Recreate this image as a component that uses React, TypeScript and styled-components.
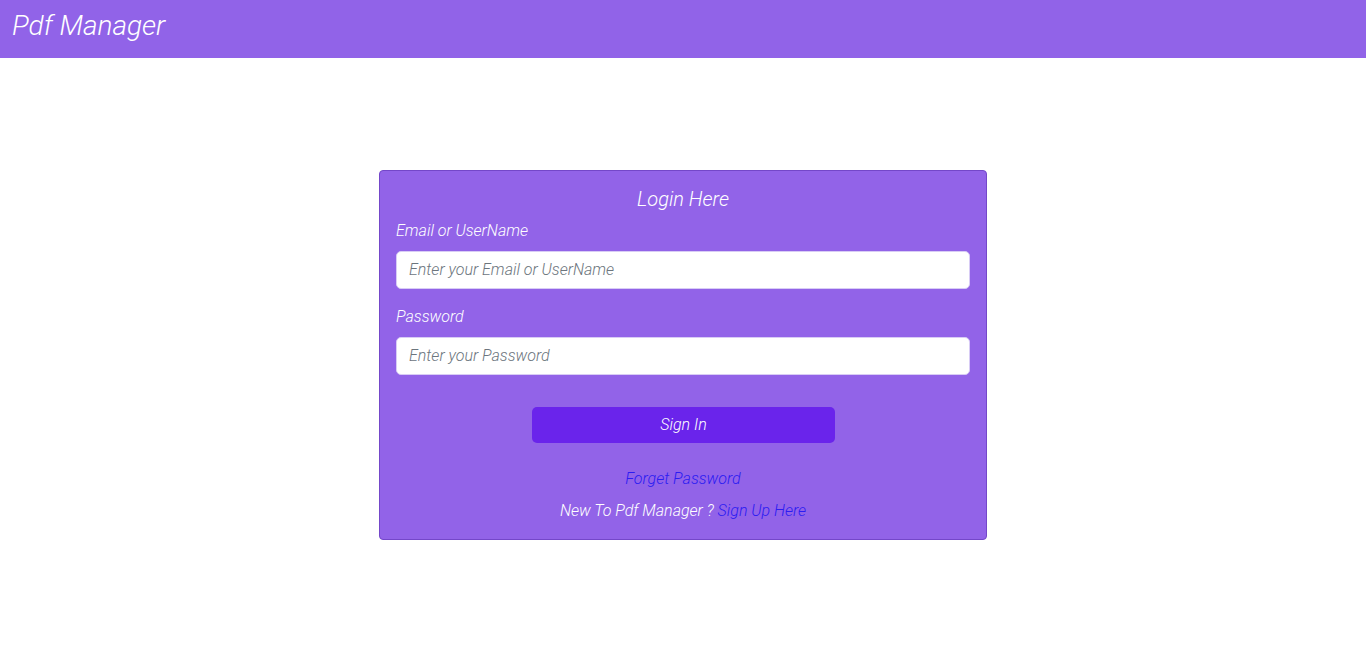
import React from 'react';
import styled, { createGlobalStyle } from 'styled-components';

export default function App() {
  return (
    <>
      <GlobalStyle />
      <Header>
        <Brand>Pdf Manager</Brand>
      </Header>
      <Main>
        <Card>
          <Title>Login Here</Title>
          <Label htmlFor="user">Email or UserName</Label>
          <Input id="user" type="text" placeholder="Enter your Email or UserName" />
          <Label htmlFor="pass" $gap>
            Password
          </Label>
          <Input id="pass" type="password" placeholder="Enter your Password" />
          <ButtonRow>
            <SignIn>Sign In</SignIn>
          </ButtonRow>
          <Forget href="#">Forget Password</Forget>
          <Footer>
            New To Pdf Manager ? <Link href="#">Sign Up Here</Link>
          </Footer>
        </Card>
      </Main>
    </>
  );
}

const GlobalStyle = createGlobalStyle`
  body {
    margin: 0;
    background: #fff;
    font-family: Roboto, "Liberation Sans", sans-serif;
    font-weight: 300;
    font-style: italic;
  }
  * {
    box-sizing: border-box;
  }
`;

const Header = styled.header`
  height: 58px;
  background-color: #9163e8;
  display: flex;
  align-items: center;
  padding: 0 12px;
  padding-bottom: 8px;
`;

const Brand = styled.div`
  font-size: 28px;
  color: #fff;
  font-weight: 300;
  font-style: italic;
`;

const Main = styled.main`
  display: flex;
  justify-content: center;
  padding-top: 112px;
`;

const Card = styled.div`
  width: 608px;
  background-color: #9263e8;
  border: 1px solid #7447c9;
  border-radius: 4px;
  padding: 16px 16px 18px;
  display: flex;
  flex-direction: column;
`;

const Title = styled.div`
  text-align: center;
  color: #fff;
  font-size: 20px;
  line-height: 24px;
  margin-bottom: 10px;
`;

const Label = styled.label<{ $gap?: boolean }>`
  color: #fff;
  font-size: 16px;
  line-height: 20px;
  margin-top: ${(p) => (p.$gap ? '18px' : '0')};
  margin-bottom: 10px;
`;

const Input = styled.input`
  height: 38px;
  width: 100%;
  border: 1px solid #d8ccf5;
  border-radius: 5px;
  background: #fff;
  padding: 0 12px 2px;
  font-family: Roboto, "Liberation Sans", sans-serif;
  font-weight: 300;
  font-style: italic;
  font-size: 16px;
  color: #495057;
  outline: none;

  &::placeholder {
    color: #6c757d;
  }
`;

const ButtonRow = styled.div`
  display: flex;
  justify-content: center;
  margin-top: 32px;
  padding-left: 1px;
`;

const SignIn = styled.button`
  width: 303px;
  height: 36px;
  border: none;
  border-radius: 5px;
  background-color: #6a24eb;
  color: #fff;
  font-family: Roboto, "Liberation Sans", sans-serif;
  font-weight: 300;
  font-style: italic;
  font-size: 16px;
  padding-bottom: 2px;
  cursor: pointer;
`;

const Forget = styled.a`
  align-self: center;
  margin-top: 26px;
  font-size: 16px;
  line-height: 20px;
  color: #2c1cf2;
  text-decoration: none;
`;

const Footer = styled.div`
  text-align: center;
  margin-top: 12px;
  font-size: 16px;
  line-height: 20px;
  color: #fff;
`;

const Link = styled.a`
  color: #2c1cf2;
  text-decoration: none;
`;
